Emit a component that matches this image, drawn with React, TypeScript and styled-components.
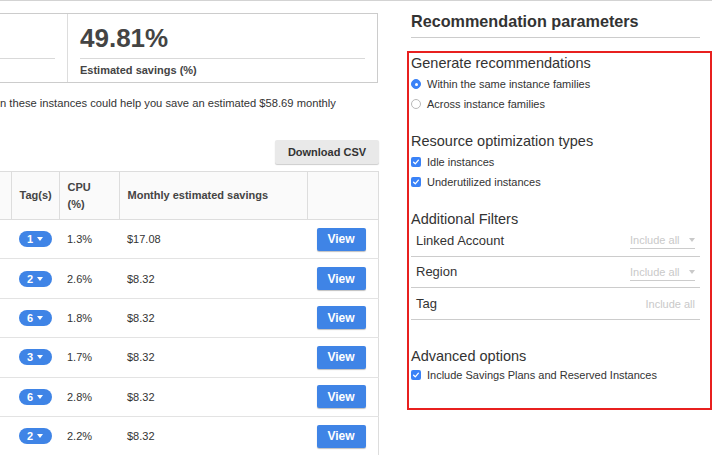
import React from 'react';
import styled, { createGlobalStyle } from 'styled-components';

const GlobalStyle = createGlobalStyle`
	html, body {
		margin: 0;
		padding: 0;
		background: #fff;
		overflow: hidden;
	}
	body {
		font-family: "Liberation Sans", Arial, Helvetica, sans-serif;
		color: #333;
	}
	* {
		box-sizing: border-box;
	}
`;

const Page = styled.div`
	display: flex;
	width: 712px;
	height: 455px;
	border-top: 1px solid #d3d3d3;
	overflow: hidden;
`;

const Results = styled.section`
	flex: none;
	width: 379px;
	padding-top: 12px;
`;

const StatCard = styled.div`
	display: grid;
	grid-template-columns: 68px 1fr;
	width: 378px;
	height: 70px;
	border: 1px solid #ccc;
	border-left: none;
`;

const Stat = styled.div<{ $clipped?: boolean }>`
	display: flex;
	flex-direction: column;
	padding: 9px 12px 0 ${(p) => (p.$clipped ? '0' : '12px')};
	border-right: ${(p) => (p.$clipped ? '1px solid #ddd' : 'none')};
`;

const StatValue = styled.div`
	flex: none;
	height: 36px;
	padding-bottom: 5px;
	font-size: 26px;
	line-height: 30px;
	font-weight: bold;
	color: #444;
	border-bottom: 1px solid #d9d9d9;
`;

const StatLabel = styled.div`
	padding-top: 4px;
	font-size: 11px;
	line-height: 14px;
	font-weight: bold;
	color: #444;
`;

const Summary = styled.p`
	margin: 13px 0 0;
	font-size: 11.2px;
	line-height: 14px;
	color: #333;
	white-space: nowrap;
`;

const Toolbar = styled.div`
	display: flex;
	justify-content: flex-end;
	margin-top: 30px;
`;

const GrayButton = styled.button`
	width: 104px;
	height: 24px;
	border: none;
	border-radius: 2px;
	background: #e9e9e9;
	box-shadow: 0 1px 1px rgba(0, 0, 0, 0.2);
	font-family: inherit;
	font-size: 11px;
	font-weight: bold;
	color: #333;
	padding: 0;
`;

const Table = styled.table`
	margin-top: 7px;
	width: 378px;
	table-layout: fixed;
	border-collapse: collapse;
	border-top: 1px solid #ddd;
	border-right: 1px solid #ddd;
`;

const HeadCell = styled.th`
	height: 48px;
	padding: 0 8px;
	background: #fafafa;
	border-right: 1px solid #ddd;
	border-bottom: 1px solid #ddd;
	text-align: left;
	vertical-align: middle;
	font-size: 11px;
	line-height: 17px;
	font-weight: bold;
	color: #444;
`;

const Cell = styled.td<{ $align?: 'left' | 'right' }>`
	height: 39.4px;
	padding: 0 ${(p) => (p.$align === 'right' ? '12px' : '8px')} 0 8px;
	border-bottom: 1px solid #e3e3e3;
	text-align: ${(p) => p.$align ?? 'left'};
	vertical-align: middle;
	font-size: 11px;
	color: #333;
	white-space: nowrap;
`;

const TagPill = styled.span`
	display: inline-flex;
	align-items: center;
	gap: 4px;
	height: 16px;
	width: 33px;
	padding-left: 8px;
	border-radius: 8px;
	background: #3f84e6;
	color: #fff;
	font-size: 11px;
	font-weight: bold;
`;

const Caret = styled.span<{ $color: string }>`
	display: inline-block;
	width: 0;
	height: 0;
	border-left: 3.5px solid transparent;
	border-right: 3.5px solid transparent;
	border-top: 4px solid ${(p) => p.$color};
`;

const BlueButton = styled.button`
	width: 49px;
	height: 23px;
	border: none;
	border-radius: 2px;
	background: #3f84e6;
	box-shadow: 0 1px 1px rgba(0, 0, 0, 0.25);
	color: #fff;
	font-family: inherit;
	font-size: 12px;
	font-weight: bold;
	padding: 0;
`;

const Params = styled.aside`
	flex: none;
	width: 289px;
	margin-left: 32px;
	padding-top: 10px;
`;

const ParamsTitle = styled.h2`
	margin: 0;
	padding-bottom: 6px;
	border-bottom: 1px solid #ccc;
	font-size: 16.2px;
	line-height: 20px;
	font-weight: bold;
	color: #333;
`;

const Highlight = styled.div`
	margin: 13px -12px 0 -4px;
	padding: 1px 10px 23px 2px;
	border: 2px solid #e8201f;
`;

const GroupTitle = styled.h3<{ $gap: number; $after?: number }>`
	margin: ${(p) => p.$gap}px 0 ${(p) => p.$after ?? 2}px;
	font-size: 14.5px;
	line-height: 18px;
	font-weight: normal;
	color: #333;
`;

const Option = styled.label`
	display: flex;
	align-items: center;
	gap: 6px;
	height: 20px;
	font-size: 11px;
	color: #333;
`;

const Radio = styled.span<{ $checked?: boolean }>`
	position: relative;
	width: 10px;
	height: 10px;
	border-radius: 50%;
	background: ${(p) => (p.$checked ? '#3a82f7' : '#fff')};
	border: 1px solid ${(p) => (p.$checked ? '#3a82f7' : '#b9b9b9')};

	&::after {
		content: '';
		display: ${(p) => (p.$checked ? 'block' : 'none')};
		position: absolute;
		left: 2.5px;
		top: 2.5px;
		width: 3px;
		height: 3px;
		border-radius: 50%;
		background: #fff;
	}
`;

const Check = styled.span`
	display: inline-flex;
	align-items: center;
	justify-content: center;
	width: 10px;
	height: 10px;
	border-radius: 2px;
	background: #3a82f7;
`;

const FilterRow = styled.div`
	display: flex;
	align-items: center;
	justify-content: space-between;
	height: 31.5px;
	padding: 0 5px;
	border-bottom: 1px solid #ccc;
	font-size: 13px;
	color: #333;
`;

const Select = styled.span<{ $plain?: boolean }>`
	display: inline-flex;
	align-items: center;
	justify-content: space-between;
	width: ${(p) => (p.$plain ? 'auto' : '65px')};
	padding-bottom: 2px;
	margin-top: 3px;
	border-bottom: ${(p) => (p.$plain ? 'none' : '1px solid #ccc')};
	font-size: 11px;
	color: #c9c9c9;
`;

const CheckMark = () => (
	<svg width="8" height="8" viewBox="0 0 8 8">
		<path d="M1.6 4.2 L3.3 5.8 L6.4 2.2" fill="none" stroke="#fff" strokeWidth="1.3" strokeLinecap="round" strokeLinejoin="round" />
	</svg>
);

const rows = [
	{ tags: 1, cpu: '1.3%', savings: '$17.08' },
	{ tags: 2, cpu: '2.6%', savings: '$8.32' },
	{ tags: 6, cpu: '1.8%', savings: '$8.32' },
	{ tags: 3, cpu: '1.7%', savings: '$8.32' },
	{ tags: 6, cpu: '2.8%', savings: '$8.32' },
	{ tags: 2, cpu: '2.2%', savings: '$8.32' },
];

const filters = [
	{ label: 'Linked Account', dropdown: true },
	{ label: 'Region', dropdown: true },
	{ label: 'Tag', dropdown: false },
];

export default function App() {
	return (
		<>
			<GlobalStyle />
			<Page>
				<Results>
					<StatCard>
						<Stat $clipped>
							<StatValue />
						</Stat>
						<Stat>
							<StatValue>49.81%</StatValue>
							<StatLabel>Estimated savings (%)</StatLabel>
						</Stat>
					</StatCard>
					<Summary>n these instances could help you save an estimated $58.69 monthly</Summary>
					<Toolbar>
						<GrayButton>Download CSV</GrayButton>
					</Toolbar>
					<Table>
						<colgroup>
							<col style={{ width: 11 }} />
							<col style={{ width: 48 }} />
							<col style={{ width: 60 }} />
							<col style={{ width: 188 }} />
							<col style={{ width: 71 }} />
						</colgroup>
						<thead>
							<tr>
								<HeadCell />
								<HeadCell>Tag(s)</HeadCell>
								<HeadCell>
									CPU
									<br />
									(%)
								</HeadCell>
								<HeadCell>Monthly estimated savings</HeadCell>
								<HeadCell />
							</tr>
						</thead>
						<tbody>
							{rows.map((row, i) => (
								<tr key={i}>
									<Cell />
									<Cell>
										<TagPill>
											{row.tags}
											<Caret $color="#fff" />
										</TagPill>
									</Cell>
									<Cell>{row.cpu}</Cell>
									<Cell>{row.savings}</Cell>
									<Cell $align="right">
										<BlueButton>View</BlueButton>
									</Cell>
								</tr>
							))}
						</tbody>
					</Table>
				</Results>
				<Params>
					<ParamsTitle>Recommendation parameters</ParamsTitle>
					<Highlight>
						<GroupTitle $gap={0}>Generate recommendations</GroupTitle>
						<Option>
							<Radio $checked />
							Within the same instance families
						</Option>
						<Option>
							<Radio />
							Across instance families
						</Option>

						<GroupTitle $gap={18}>Resource optimization types</GroupTitle>
						<Option>
							<Check>
								<CheckMark />
							</Check>
							Idle instances
						</Option>
						<Option>
							<Check>
								<CheckMark />
							</Check>
							Underutilized instances
						</Option>

						<GroupTitle $gap={18} $after={-3}>
							Additional Filters
						</GroupTitle>
						{filters.map((f) => (
							<FilterRow key={f.label}>
								{f.label}
								<Select $plain={!f.dropdown}>
									Include all
									{f.dropdown && <Caret $color="#c9c9c9" />}
								</Select>
							</FilterRow>
						))}

						<GroupTitle $gap={27} $after={0}>
							Advanced options
						</GroupTitle>
						<Option>
							<Check>
								<CheckMark />
							</Check>
							Include Savings Plans and Reserved Instances
						</Option>
					</Highlight>
				</Params>
			</Page>
		</>
	);
}
